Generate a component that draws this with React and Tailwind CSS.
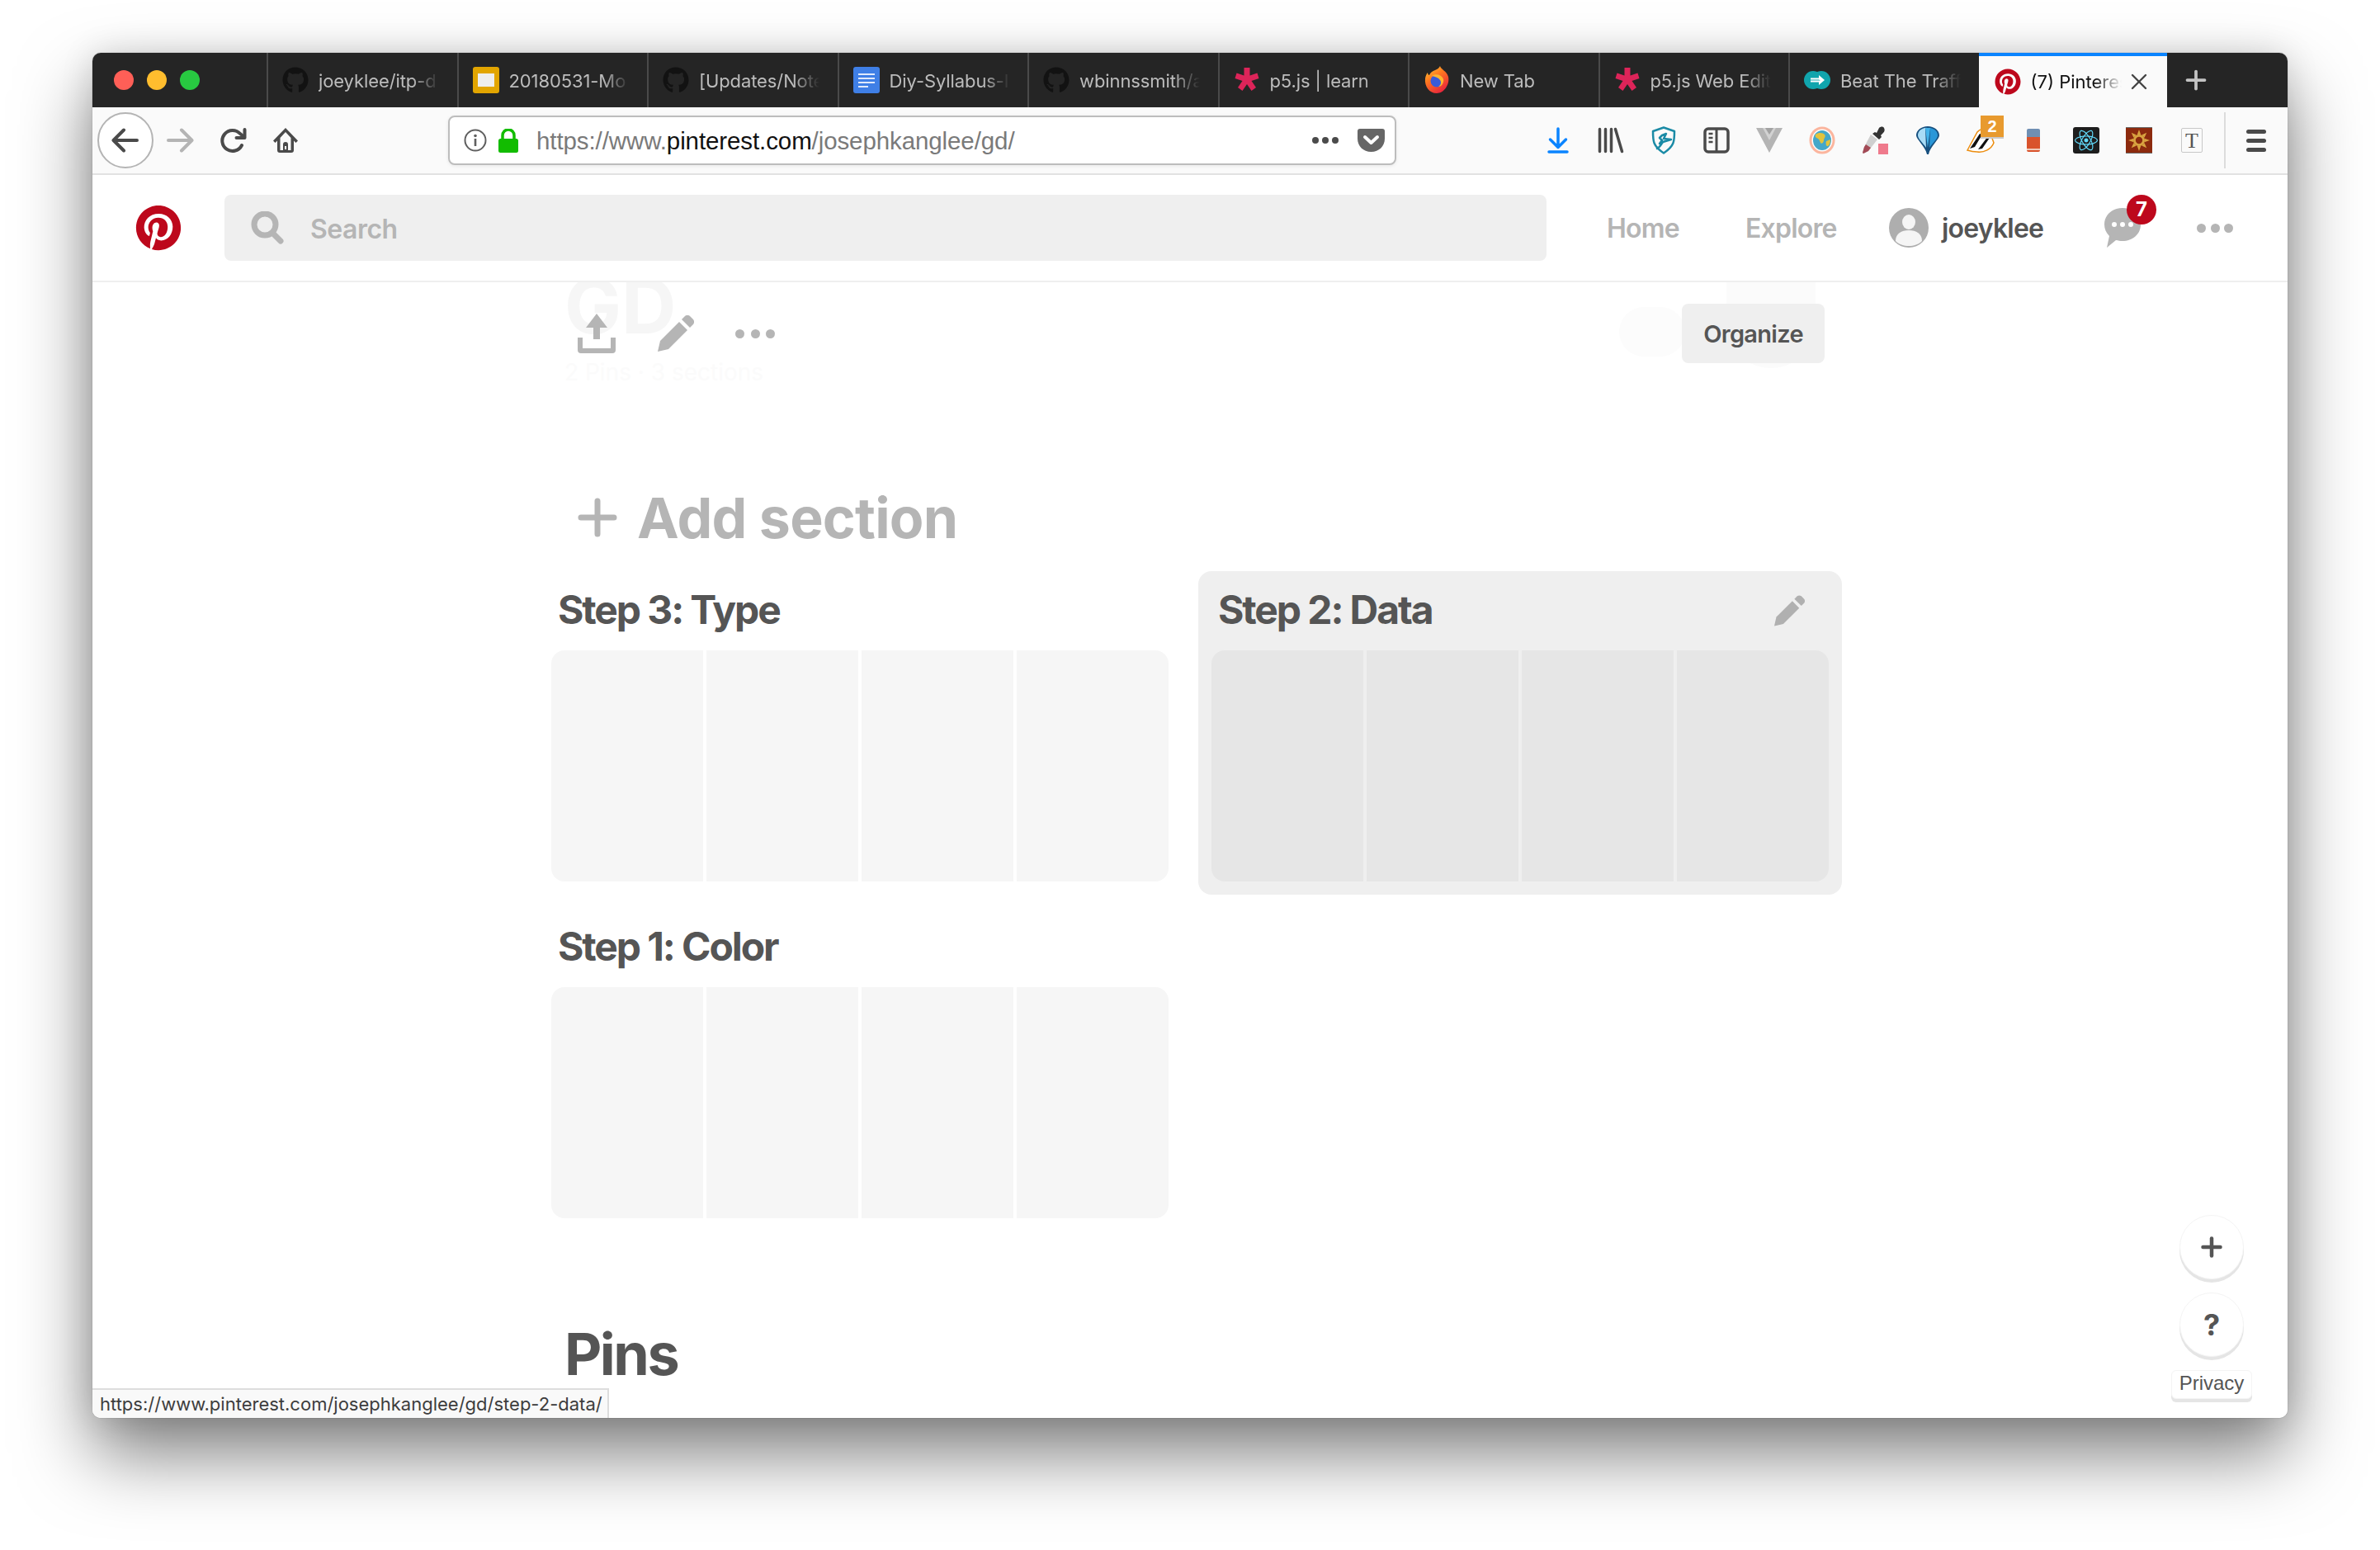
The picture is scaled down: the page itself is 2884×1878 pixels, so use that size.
import { FaGithub, FaPinterest, FaReact, FaGetPocket } from "react-icons/fa";
import { X, Plus } from "lucide-react";

const GithubIcon = () => <FaGithub size={32} className="text-[#121212]" />;

const SlidesIcon = () => (
  <div className="w-8 h-8 rounded-[3px] bg-[#e2a500] flex items-center justify-center">
    <div className="w-5 h-4 bg-[#eeeeee]" />
  </div>
);

const DocsIcon = () => (
  <div className="w-8 h-8 rounded-[3px] bg-[#3f7fe6] flex flex-col justify-center gap-[3px] pl-[6px]">
    <div className="w-5 h-[2px] bg-[#dfe9fb]" />
    <div className="w-5 h-[2px] bg-[#dfe9fb]" />
    <div className="w-5 h-[2px] bg-[#dfe9fb]" />
    <div className="w-3 h-[2px] bg-[#dfe9fb]" />
  </div>
);

const P5Icon = () => (
  <svg width="32" height="32" viewBox="0 0 32 32">
    <path
      d="M12.500 1h7v9.500l9-3 2 6.500-9 3 5.500 8-5.500 4-5.500-8-5.500 8-5.500-4 5.500-8-9-3 2-6.500 9 3z"
      fill="#dd2459"
    />
  </svg>
);

const FirefoxIcon = () => (
  <svg width="32" height="34" viewBox="0 0 32 34">
    <defs>
      <linearGradient id="ffOuter" x1="0" y1="0" x2="0.6" y2="1">
        <stop offset="0" stopColor="#ffd43a" />
        <stop offset="0.45" stopColor="#ff7a1f" />
        <stop offset="1" stopColor="#e8273b" />
      </linearGradient>
    </defs>
    <path
      d="M20 0c1 4 8 6 10 13 2 9-5 20-14 20C7 33 1 25 2 15c.5-3 2-6 3-7 0 2 1 3 2 3 1-3 4-5 7-6 3-1 5-3 6-5z"
      fill="url(#ffOuter)"
    />
    <circle cx="16" cy="18" r="7.500" fill="#3a5bd9" />
    <path d="M10 12c4-3 12-2 14 4 1 4-2 9-6 9 3-2 4-5 2-8-2-3-6-4-10-5z" fill="#ffb52e" />
  </svg>
);

const TrafficIcon = () => (
  <svg width="32" height="24" viewBox="0 0 32 24">
    <circle cx="11" cy="12" r="11" fill="#11a5ad" />
    <circle cx="21" cy="12" r="11" fill="#11a5ad" />
    <path d="M8 9.500h10V6l7 6-7 6v-3.500H8v-2h12l-2-1H8z" fill="#ffffff" />
  </svg>
);

const PinIcon = () => <FaPinterest size={32} className="text-[#bd081c]" />;

const tabs = [
  { title: "joeyklee/itp-d", Icon: GithubIcon },
  { title: "20180531-Mo", Icon: SlidesIcon },
  { title: "[Updates/Note", Icon: GithubIcon },
  { title: "Diy-Syllabus-I", Icon: DocsIcon },
  { title: "wbinnssmith/a", Icon: GithubIcon },
  { title: "p5.js | learn", Icon: P5Icon },
  { title: "New Tab", Icon: FirefoxIcon },
  { title: "p5.js Web Edit", Icon: P5Icon },
  { title: "Beat The Traff", Icon: TrafficIcon },
];

const Tab = ({ title, Icon }) => (
  <div className="w-[230.5px] h-full shrink-0 flex items-center pl-[17px] border-l-2 border-[#4a4a4a]">
    <div className="w-8 h-8 shrink-0 flex items-center justify-center">
      <Icon />
    </div>
    <span className="ml-3 mt-[3px] w-[146px] overflow-hidden whitespace-nowrap text-[22px] tracking-[-0.1px] text-[#bcbcbc] [mask-image:linear-gradient(to_right,black_78%,transparent)]">
      {title}
    </span>
  </div>
);

const TabBar = () => (
  <div className="h-[66px] shrink-0 bg-[#252525] flex">
    <div className="w-[211px] shrink-0 flex items-center gap-4 pl-[26px]">
      <div className="w-6 h-6 rounded-full bg-[#ff5f57]" />
      <div className="w-6 h-6 rounded-full bg-[#ffbd2e]" />
      <div className="w-6 h-6 rounded-full bg-[#28c941]" />
    </div>
    {tabs.map((t, i) => (
      <Tab key={i} title={t.title} Icon={t.Icon} />
    ))}
    <div className="w-[228.500px] h-full shrink-0 bg-[#fafafa] border-t-4 border-[#0a84ff] flex items-center pl-[19px]">
      <PinIcon />
      <span className="ml-3 mt-[1px] w-[110px] overflow-hidden whitespace-nowrap text-[22px] text-[#111] [mask-image:linear-gradient(to_right,black_70%,transparent)]">
        (7) Pinterest
      </span>
      <X size={32} strokeWidth={1.8} className="ml-[5px] text-[#444]" />
    </div>
    <div className="flex-1 flex items-center pl-[17px]">
      <Plus size={36} strokeWidth={2.5} className="text-[#c4c4c4]" />
    </div>
  </div>
);

const BackIcon = ({ color }) => (
  <svg width="34" height="30" viewBox="0 0 34 30" fill="none" stroke={color} strokeWidth="4" strokeLinecap="round" strokeLinejoin="round">
    <path d="M31 15H3M15 2.500 2.500 15 15 27.500" />
  </svg>
);

const ForwardIcon = () => (
  <svg width="34" height="30" viewBox="0 0 34 30" fill="none" stroke="#b4b4b4" strokeWidth="4" strokeLinecap="round" strokeLinejoin="round">
    <path d="M3 15h28M19 2.500 31.500 15 19 27.500" />
  </svg>
);

const ReloadIcon = () => (
  <svg width="32" height="30" viewBox="0 0 32 30" fill="none" stroke="#4a4a4a" strokeWidth="4" strokeLinecap="round" strokeLinejoin="round">
    <path d="M26 21a12.500 12.500 0 1 1-2-14l5 4" />
    <path d="M29.500 2v10h-10" />
  </svg>
);

const HomeIcon = () => (
  <svg width="32" height="32" viewBox="0 0 32 32">
    <path
      d="M16 1 31 16.500l-2.500 2.500-2.500-2.500V28a3 3 0 0 1-3 3H9a3 3 0 0 1-3-3V16.500L3.500 19 1 16.500zM16 6 9.500 13v15H13v-7a3 3 0 0 1 6 0v7h3.500V13z"
      fill="#4a4a4a"
    />
    <rect x="13" y="21" width="6" height="10" fill="#4a4a4a" />
    <rect x="15" y="23" width="2" height="4" fill="#fafafa" />
  </svg>
);

const InfoIcon = () => (
  <svg width="28" height="28" viewBox="0 0 28 28" fill="none">
    <circle cx="14" cy="14" r="12.500" stroke="#5f5f5f" strokeWidth="2" />
    <rect x="12.700" y="12" width="2.600" height="9" fill="#5f5f5f" />
    <circle cx="14" cy="8.500" r="1.800" fill="#5f5f5f" />
  </svg>
);

const LockIcon = () => (
  <svg width="24" height="29" viewBox="0 0 24 29">
    <path d="M5 13V8a7 7 0 0 1 14 0v5" fill="none" stroke="#12bc00" strokeWidth="3.500" />
    <rect x="0" y="12" width="24" height="17" rx="2.500" fill="#12bc00" />
  </svg>
);

const Dots = ({ w, size, color }) => (
  <div className={`flex justify-between ${w}`}>
    {[0, 1, 2].map((i) => (
      <div key={i} className={`rounded-full ${size} ${color}`} />
    ))}
  </div>
);

const PocketIcon = () => (
  <svg width="33" height="28" viewBox="0 0 33 28">
    <path d="M3 0h27a3 3 0 0 1 3 3v9c0 9-7 16-16.500 16S0 21 0 12V3a3 3 0 0 1 3-3z" fill="#666666" />
    <path d="M9 10l7.500 7 7.500-7" fill="none" stroke="#ffffff" strokeWidth="4" strokeLinecap="round" strokeLinejoin="round" />
  </svg>
);

const DownloadIcon = () => (
  <svg width="26" height="32" viewBox="0 0 26 32" fill="none" stroke="#0a84ff" strokeWidth="3.500" strokeLinecap="round" strokeLinejoin="round">
    <path d="M13 2v22M3.500 15 13 24.500 22.500 15M2 30h22" />
  </svg>
);

const LibraryIcon = () => (
  <svg width="32" height="32" viewBox="0 0 32 32" fill="none" stroke="#4a4a4a" strokeWidth="3.500" strokeLinecap="round">
    <path d="M2.500 2.500v27M9.500 2.500v27M16.500 2.500v27M21.500 2.500l8 27" />
  </svg>
);

const ShieldIcon = () => (
  <svg width="32" height="34" viewBox="0 0 32 34" fill="none" stroke="#1b8ba6" strokeWidth="2.500" strokeLinejoin="round">
    <path d="M16 1.500 29 6c0 12 0 18-13 26.500C3 24 3 18 3 6z" />
    <path d="M8 27c3-1 5-5 7-8l10-3-9-1 3-6-5 2-3 3 3 3-3 4" strokeLinecap="round" />
  </svg>
);

const SidebarIcon = () => (
  <svg width="32" height="32" viewBox="0 0 32 32" fill="none">
    <rect x="2" y="2" width="28" height="28" rx="4" stroke="#4a4a4a" strokeWidth="3.500" />
    <path d="M16 2v28" stroke="#4a4a4a" strokeWidth="3" />
    <path d="M6.500 8h5M6.500 13h5M6.500 18h5" stroke="#4a4a4a" strokeWidth="2.500" />
  </svg>
);

const VeeIcon = () => (
  <svg width="32" height="30" viewBox="0 0 32 30">
    <path d="M0 0h32L16 30z" fill="#b4b4b4" />
    <path d="M8 0h16l-8 15z" fill="#d2d2d2" />
    <path d="M11 0h10l-5 8z" fill="#a2a2a2" />
  </svg>
);

const GlobeIcon = () => (
  <svg width="32" height="34" viewBox="0 0 32 34">
    <ellipse cx="16" cy="17" rx="15.500" ry="16.500" fill="#fbb59e" />
    <ellipse cx="16" cy="17" rx="12.500" ry="13.500" fill="#ffffff" />
    <ellipse cx="16" cy="17" rx="11" ry="12" fill="#45a7c9" />
    <path d="M8 10c4-3 9-2 11 0 2 3-1 4-1 7s-3 5-4 3-1-4-3-5-4-2-3-5zM21 18l5-2c0 4-1 7-3 8s-3-3-2-6z" fill="#e2c33d" />
  </svg>
);

const DropperIcon = () => (
  <svg width="34" height="34" viewBox="0 0 34 34">
    <path d="M22 2c2-2 5-2 6 0s1 4-1 6l-3 3 1 2-3 3-8-7 3-2 2 1z" fill="#333" />
    <path d="M12 10l8 6-11 14-6 3-1-1 2-7z" fill="#cfcfcf" />
    <path d="M6 22l6 4-3 4-6 3-1-1 2-7z" fill="#a34a56" />
    <rect x="21" y="21" width="12" height="13" fill="#ef7a8c" />
  </svg>
);

const BalloonIcon = () => (
  <svg width="30" height="34" viewBox="0 0 30 34">
    <path d="M15 0C7 0 1 5 1 11c0 5 11 13 13 23h2c2-10 13-18 13-23C29 5 23 0 15 0z" fill="#17507f" />
    <path d="M15 1.500C9 1.500 3 5 3 11c0 4 6 9 10 15L12 2z" fill="#a9dcf6" />
    <path d="M12 2h6l-3 24z" fill="#43b3ea" />
    <path d="M18 2c5 1 9 4 9 9 0 4-6 9-10 15z" fill="#2a97d8" />
  </svg>
);

const BadgerIcon = () => (
  <svg width="36" height="32" viewBox="0 0 36 32">
    <path d="M2 28 14 6c3-4 10-5 14-3l6 16c-3 8-12 12-20 11-5 0-9-1-12-2z" fill="#ffffff" stroke="#ec8d0f" strokeWidth="1.500" />
    <path d="M5 26 17 8l3 1-9 15zM15 27l12-16 2 2-9 13z" fill="#111" />
  </svg>
);

const RedStackIcon = () => (
  <div className="w-4 h-7 flex flex-col rounded-[2px] overflow-hidden">
    <div className="h-[10px] bg-[#6f8fb3]" />
    <div className="flex-1 bg-[#d9532c]" />
    <div className="h-[2px] bg-[#f0c9b8]" />
    <div className="h-[2px] bg-[#d9532c]" />
  </div>
);

const ReactIcon = () => (
  <div className="w-8 h-8 rounded-[3px] bg-[#1d1d1d] flex items-center justify-center">
    <FaReact size={28} className="text-[#61dafb]" />
  </div>
);

const SunIcon = () => (
  <div className="w-8 h-8 bg-[#8c2a0e] border-t border-b border-[#6a6a6a] flex items-center justify-center">
    <svg width="26" height="26" viewBox="0 0 28 28">
      <g fill="#d9a441">
        <path d="M14 0l2.500 7h-5zM14 28l-2.500-7h5zM0 14l7-2.500v5zM28 14l-7 2.500v-5zM4 4l6.500 3-3.500 3.500zM24 24l-6.500-3 3.500-3.500zM24 4l-3 6.500L17.500 7zM4 24l3-6.500 3.500 3.500z" />
      </g>
      <circle cx="14" cy="14" r="6" fill="none" stroke="#d9a441" strokeWidth="3" />
    </svg>
  </div>
);

const TextIcon = () => (
  <div className="w-[26px] h-[30px] bg-[#fafafa] border border-[#c8c8c8] rounded-[2px] flex items-center justify-center font-['Liberation_Serif',serif] text-[26px] text-[#555]">
    T
  </div>
);

const extensionIcons = [
  DownloadIcon,
  LibraryIcon,
  ShieldIcon,
  SidebarIcon,
  VeeIcon,
  GlobeIcon,
  DropperIcon,
  BalloonIcon,
  BadgerIcon,
  RedStackIcon,
  ReactIcon,
  SunIcon,
  TextIcon,
];

const Toolbar = () => (
  <div className="h-[82px] shrink-0 bg-[#fafafa] border-b-2 border-[#e2e2e2] flex items-center font-['Liberation_Sans',sans-serif]">
    <div className="ml-[6px] w-[68px] h-[68px] shrink-0 rounded-full bg-white border-2 border-[#b4b4b4] flex items-center justify-center">
      <BackIcon color="#4a4a4a" />
    </div>
    <div className="w-16 flex justify-center"><ForwardIcon /></div>
    <div className="w-[66px] flex justify-center"><ReloadIcon /></div>
    <div className="w-[60px] flex justify-center"><HomeIcon /></div>
    <div className="ml-[167px] w-[1149px] h-[60px] shrink-0 rounded-lg bg-white border-2 border-[#bdbdbd] shadow-[0_1px_4px_rgba(0,0,0,0.08)] flex items-center pl-[17px]">
      <InfoIcon />
      <div className="ml-[14px]"><LockIcon /></div>
      <span className="ml-[22px] mt-[3px] text-[29.500px] tracking-[-0.1px] text-[#7a7a7a] whitespace-nowrap">
        https://www.<span className="text-[#111]">pinterest.com</span>/josephkanglee/gd/
      </span>
      <div className="ml-auto"><Dots w="w-8" size="w-2 h-2" color="bg-[#4a4a4a]" /></div>
      <div className="ml-[23px] mr-[12px]">
        <PocketIcon />
      </div>
    </div>
    <div className="ml-[164px] flex items-center h-full">
      {extensionIcons.map((Icon, i) => (
        <div key={i} className="relative w-16 flex justify-center">
          <Icon />
          {i === 8 && (
            <span className="absolute top-[-14px] left-[32px] w-7 h-7 bg-[#e89a2e] border-b-2 border-[#c9c9c9] flex items-center justify-center text-white text-[20px] font-bold">
              2
            </span>
          )}
        </div>
      ))}
    </div>
    <div className="ml-[7px] w-[2px] h-[68px] bg-[#dcdcdc]" />
    <div className="ml-[25px] flex flex-col gap-[6px]">
      <div className="w-6 h-[5px] rounded-full bg-[#4a4a4a]" />
      <div className="w-6 h-[5px] rounded-full bg-[#4a4a4a]" />
      <div className="w-6 h-[5px] rounded-full bg-[#4a4a4a]" />
    </div>
  </div>
);

const SearchGlyph = () => (
  <svg width="40" height="40" viewBox="0 0 40 40" fill="none" stroke="#b5b5b5">
    <circle cx="17" cy="16" r="13" strokeWidth="7" />
    <path d="M27 27l9 9" strokeWidth="7" strokeLinecap="round" />
  </svg>
);

const AvatarGlyph = () => (
  <svg width="48" height="48" viewBox="0 0 48 48">
    <circle cx="24" cy="24" r="24" fill="#aeaeae" />
    <ellipse cx="24" cy="17" rx="8" ry="9" fill="#f5f5f5" />
    <path d="M8 40c0-9 7-13 16-13s16 4 16 13c-4 4-10 6-16 6S12 44 8 40z" fill="#f5f5f5" />
  </svg>
);

const ChatGlyph = () => (
  <svg width="44" height="48" viewBox="0 0 44 48">
    <path d="M22 0c12 0 22 8 22 20S34 40 22 40c-3 0-5-.5-8-1L3 48l3-14C2 30 0 25 0 20 0 8 10 0 22 0z" fill="#b5b5b5" />
    <circle cx="12" cy="20" r="3" fill="#fff" />
    <circle cx="22" cy="20" r="3" fill="#fff" />
    <circle cx="32" cy="20" r="3" fill="#fff" />
  </svg>
);

const Header = () => (
  <div className="h-[130px] shrink-0 bg-white border-b-2 border-[#efefef] flex items-center">
    <div className="ml-[52px]">
      <FaPinterest size={56} className="text-[#bd081c]" />
    </div>
    <div className="ml-[52px] w-[1602px] h-20 rounded-lg bg-[#efefef] flex items-center pl-8">
      <SearchGlyph />
      <span className="ml-[32px] mt-[3px] text-[32px] font-semibold tracking-[-0.5px] text-[#b5b5b5]">Search</span>
    </div>
    <span className="ml-[73px] mt-[2px] w-[168px] text-[32px] font-semibold tracking-[-0.8px] text-[#b5b5b5]">Home</span>
    <span className="w-[174px] mt-[2px] text-[32px] font-semibold tracking-[-0.8px] text-[#b5b5b5]">Explore</span>
    <AvatarGlyph />
    <span className="ml-4 mt-[2px] w-[197px] text-[32px] font-semibold tracking-[-0.8px] text-[#555]">joeyklee</span>
    <div className="relative w-[112px]">
      <ChatGlyph />
      <span className="absolute top-[-16px] left-[27px] w-[36px] h-[36px] rounded-full bg-[#bd081c] flex items-center justify-center text-white text-[24px] font-bold">
        7
      </span>
    </div>
    <Dots w="w-[44px]" size="w-[11px] h-[11px]" color="bg-[#b5b5b5]" />
  </div>
);

const UploadIcon = () => (
  <svg width="46" height="48" viewBox="0 0 46 48" fill="#b5b5b5">
    <path d="M23 0 36 17h-9v14h-8V17h-9z" />
    <path d="M0 29h6v13h34V29h6v15a4 4 0 0 1-4 4H4a4 4 0 0 1-4-4z" />
  </svg>
);

const PencilIcon = ({ color, w = 44, h = 44 }) => (
  <svg width={w} height={h} viewBox="0 0 44 44" fill={color}>
    <path d="M0 44l3-13L26 8l10 10-23 23z" />
    <path d="M29 5l4-4c2-1.500 4-1.500 6 0l4 4c1.500 2 1.500 4 0 6l-4 4z" />
  </svg>
);

const ThumbGrid = ({ color }) => (
  <div className="grid grid-cols-4 gap-1 h-[280px] rounded-2xl overflow-hidden">
    {[0, 1, 2, 3].map((i) => (
      <div key={i} className={color} />
    ))}
  </div>
);

const Section = ({ title, active }) => (
  <div className={`p-4 rounded-2xl ${active ? "bg-[#efefef]" : ""}`}>
    <div className="h-16 mb-4 pl-2 pr-[29px] flex items-center justify-between">
      <h2 className="mt-[-3px] text-[48px] font-bold tracking-[-2.1px] text-[#555]">{title}</h2>
      {active && <PencilIcon color="#b0b0b0" w={37} h={38} />}
    </div>
    <ThumbGrid color={active ? "bg-[#e6e6e6]" : "bg-[#f6f6f6]"} />
  </div>
);

const Main = () => (
  <div className="relative flex-1 overflow-hidden bg-white">
    {/* faded board header that has scrolled under the nav */}
    <div className="absolute left-[572px] top-[-26px] text-[92px] leading-[110px] font-bold text-[#f6f6f6]">GD</div>
    <div className="absolute left-[572px] top-[88px] text-[28px] text-[#fbfbfb] whitespace-nowrap">2 Pins · 3 sections</div>
    <div className="absolute left-[1980px] top-0 w-[108px] h-[104px] rounded-b-full bg-[#fbfbfb]" />
    <div className="absolute left-[1850px] top-[30px] w-[80px] h-[60px] rounded-full bg-[#fcfcfc]" />

    <div className="relative flex items-center h-[72px] mt-[26px] ml-[588px]">
      <UploadIcon />
      <div className="ml-[51px]"><PencilIcon color="#b5b5b5" /></div>
      <div className="ml-[50px]"><Dots w="w-12" size="w-[11px] h-[11px]" color="bg-[#b5b5b5]" /></div>
      <button className="ml-[1099px] w-[173px] h-[72px] pt-[2px] rounded-lg bg-[#efefef] text-[29px] font-semibold tracking-[-0.7px] text-[#555]">
        Organize
      </button>
    </div>

    <div className="mt-[147px] ml-[588px] h-20 flex items-center">
      <svg width="48" height="48" viewBox="0 0 48 48" stroke="#b5b5b5" strokeWidth="7" strokeLinecap="round">
        <path d="M24 4v40M4 24h40" />
      </svg>
      <span className="ml-[24px] text-[68px] font-bold tracking-[-0.8px] text-[#b5b5b5] whitespace-nowrap">Add section</span>
    </div>

    <div className="mt-[25px] ml-[540px] w-[1580px] grid grid-cols-2 gap-x-5 gap-y-4">
      <Section title="Step 3: Type" />
      <Section title="Step 2: Data" active />
      <Section title="Step 1: Color" />
    </div>

    <h1 className="mt-[109px] ml-[572px] h-20 leading-[80px] text-[70px] font-bold tracking-[-2.500px] text-[#555]">Pins</h1>

    <div className="absolute right-[53px] bottom-[168px] w-[78px] h-[78px] rounded-full bg-white border border-[#f4f4f4] shadow-[0_4px_0_#e5e5e5] flex items-center justify-center">
      <Plus size={36} strokeWidth={3} className="text-[#555]" />
    </div>
    <div className="absolute right-[53px] bottom-[74px] w-[78px] h-[78px] rounded-full bg-white border border-[#f4f4f4] shadow-[0_4px_0_#e5e5e5] flex items-center justify-center text-[36px] font-bold text-[#555]">
      ?
    </div>
    <div className="absolute right-[43px] bottom-[23px] w-[98px] h-[35px] pb-[3px] rounded-md bg-white border border-[#f4f4f4] shadow-[0_4px_0_#e5e5e5] flex items-center justify-center font-['Liberation_Sans',sans-serif] text-[24px] text-[#555]">
      Privacy
    </div>

    <div className="absolute left-0 bottom-0 w-[626px] h-[36px] bg-[#f9f9f9] border-t-2 border-r-2 border-[#dddddd] pl-[9px] flex items-center text-[22px] text-[#3d3d3d] whitespace-nowrap">
      https://www.pinterest.com/josephkanglee/gd/step-2-data/
    </div>
  </div>
);

export default function App() {
  return (
    <div className="w-[2884px] h-[1878px] bg-white pt-16 pl-28 overflow-hidden font-['Inter',sans-serif]">
      <div className="w-[2660px] h-[1654px] rounded-[10px] overflow-hidden flex flex-col bg-white shadow-[0_44px_88px_rgba(0,0,0,0.5),0_0_40px_rgba(0,0,0,0.12),0_0_1px_rgba(0,0,0,0.6)]">
        <TabBar />
        <Toolbar />
        <Header />
        <Main />
      </div>
    </div>
  );
}
